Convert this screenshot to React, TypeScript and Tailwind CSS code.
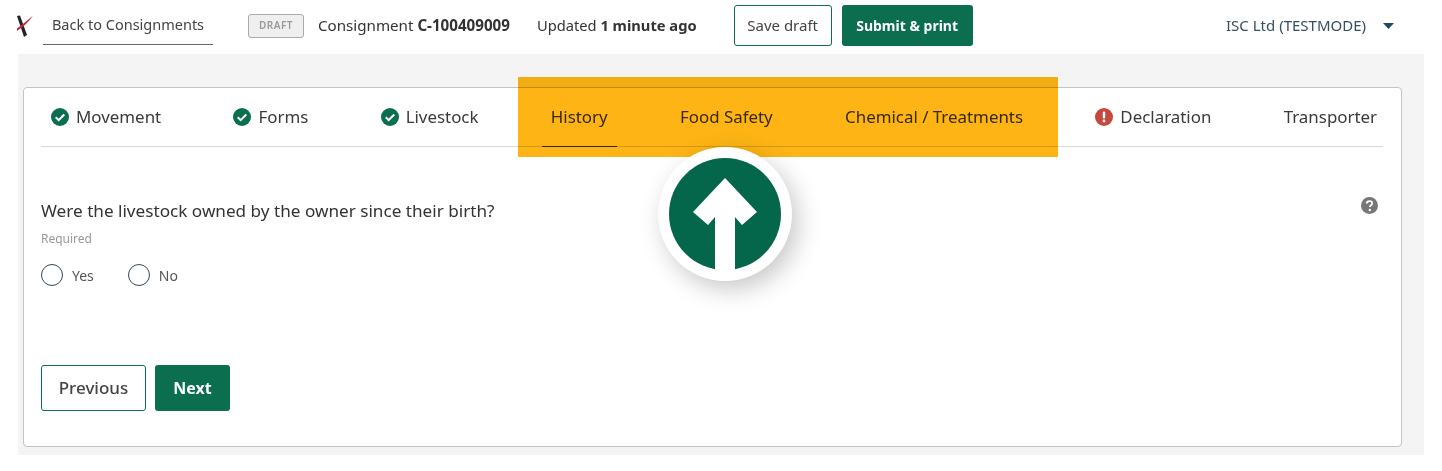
import React from "react";

const Check = () => (
  <svg width="18" height="18" viewBox="0 0 19 19" className="shrink-0">
    <circle cx="9.5" cy="9.5" r="9.5" fill="#0b6e4f" />
    <path d="M5 9.8l3.1 3L14 6.8" fill="none" stroke="#fff" strokeWidth="2.2" />
  </svg>
);

const Alert = () => (
  <svg width="18" height="18" viewBox="0 0 18 18" className="shrink-0">
    <circle cx="9" cy="9" r="9" fill="#c4483c" />
    <rect x="7.8" y="3.6" width="2.4" height="7" rx="1" fill="#fff" />
    <circle cx="9" cy="13" r="1.4" fill="#fff" />
  </svg>
);

const Tab = ({ icon, label, active }: { icon?: React.ReactNode; label: string; active?: boolean }) => (
  <div className={"flex h-[59px] items-center gap-[7px] whitespace-nowrap pb-[1px] pl-[9px] pr-[9px] " + (active ? "border-b border-[#333]" : "")}>
    {icon}
    <span>{label}</span>
  </div>
);

const Radio = ({ label }: { label: string }) => (
  <label className="flex items-center gap-[9px]">
    <span className="h-[22px] w-[22px] rounded-full border-[1.5px] border-[#2f4a5a] bg-white" />
    <span className="text-[14px] text-[#555]">{label}</span>
  </label>
);

export default function App() {
  return (
    <div className="relative h-[471px] w-[1442px] overflow-hidden bg-white font-['Noto_Sans','Open_Sans',sans-serif] text-[#333]">
      <header className="flex h-[54px] items-center whitespace-nowrap pb-[3px] pl-[17px] pr-[48px] text-[15.15px]">
        <svg width="17" height="24" viewBox="0 0 17 24" className="shrink-0">
          <path d="M0 2l3-.5L10 21l-3 2z" fill="#222" />
          <path d="M0 14.5C6 10 11 6 16 1.500 12 8 6 13 0 17z" fill="#c8283c" />
        </svg>
        <div className="ml-[9px] flex h-[38px] w-[170px] items-center justify-center border-b border-[#666] text-[14.5px] text-[#444]">
          Back to Consignments
        </div>
        <span className="ml-[35px] flex h-[24px] w-[56px] items-center justify-center rounded-[3px] border border-[#aaa] bg-[#efefef] text-[10px] font-semibold tracking-[0.5px] text-[#999]">
          DRAFT
        </span>
        <span className="ml-[14px]">
          Consignment <b className="font-bold">C-100409009</b>
        </span>
        <span className="ml-[27px] text-[14.7px]">
          Updated <b className="font-bold">1 minute ago</b>
        </span>
        <button className="ml-[37px] h-[41px] w-[98px] rounded-[3px] border border-[#0b6e4f] bg-white text-[15px] text-[#444]">
          Save draft
        </button>
        <button className="ml-[10px] h-[41px] w-[131px] rounded-[3px] bg-[#0b6e4f] text-[14px] font-bold text-white">
          Submit &amp; print
        </button>
        <span className="ml-auto text-[15px] text-[#35505f]">ISC Ltd (TESTMODE)</span>
        <svg width="11" height="6" viewBox="0 0 11 6" className="ml-[17px]">
          <path d="M0 0h11L5.5 6z" fill="#1f4a63" />
        </svg>
      </header>

      <main className="ml-[18px] h-[401px] w-[1406px] bg-[#f4f4f4] px-[5px] pt-[33px]">
        <section className="h-[360px] w-[1379px] rounded-[4px] border border-[#c4c4c4] bg-white pl-[17px] pr-[18px]">
          <nav className="flex h-[59px] items-stretch gap-[54.3px] border-b border-[#d8d8d8] pl-[1px] text-[16.9px] text-[#3a3a3a]">
            <Tab icon={<Check />} label="Movement" />
            <Tab icon={<Check />} label="Forms" />
            <Tab icon={<Check />} label="Livestock" />
            <Tab label="History" active />
            <Tab label="Food Safety" />
            <Tab label="Chemical / Treatments" />
            <Tab icon={<Alert />} label="Declaration" />
            <Tab label="Transporter" />
          </nav>

          <div className="mt-[52px] flex items-start justify-between pr-[5px]">
            <div>
              <p className="text-[17.15px] leading-[24px] text-[#333]">Were the livestock owned by the owner since their birth?</p>
              <p className="mt-[8px] text-[12px] leading-[16px] text-[#999]">Required</p>
              <div className="mt-[17px] flex gap-[34px]">
                <Radio label="Yes" />
                <Radio label="No" />
              </div>
            </div>
            <svg width="17" height="17" viewBox="0 0 17 17" className="mt-[-2px]">
              <circle cx="8.5" cy="8.5" r="8.5" fill="#777" />
              <path d="M5.8 6.6c0-1.6 1.2-2.5 2.7-2.5s2.7.9 2.7 2.3c0 1.9-2.3 1.9-2.3 3.600" fill="none" stroke="#fff" strokeWidth="1.8" />
              <circle cx="8.8" cy="13" r="1.2" fill="#fff" />
            </svg>
          </div>

          <div className="mt-[79px] flex gap-[9px]">
            <button className="h-[46px] w-[105px] rounded-[3px] border border-[#0b6e4f] bg-white text-[17px] font-medium text-[#444]">
              Previous
            </button>
            <button className="h-[46px] w-[75px] rounded-[3px] bg-[#0b6e4f] text-[16px] font-bold text-white">Next</button>
          </div>
        </section>
      </main>

      <div className="absolute left-[518px] top-[77px] h-[80px] w-[540px] bg-[#fdb414] mix-blend-multiply" />

      <div className="absolute left-[658px] top-[147px] flex h-[134px] w-[134px] items-center justify-center rounded-full bg-white shadow-[6px_8px_24px_rgba(0,0,0,0.22)]">
        <svg width="112" height="112" viewBox="0 0 112 112">
          <circle cx="56" cy="56" r="56" fill="#04664a" />
          <path d="M56 20L88 54 73 67 66 59V112H46V59L39 67 24 54Z" fill="#fff" />
        </svg>
      </div>
    </div>
  );
}
